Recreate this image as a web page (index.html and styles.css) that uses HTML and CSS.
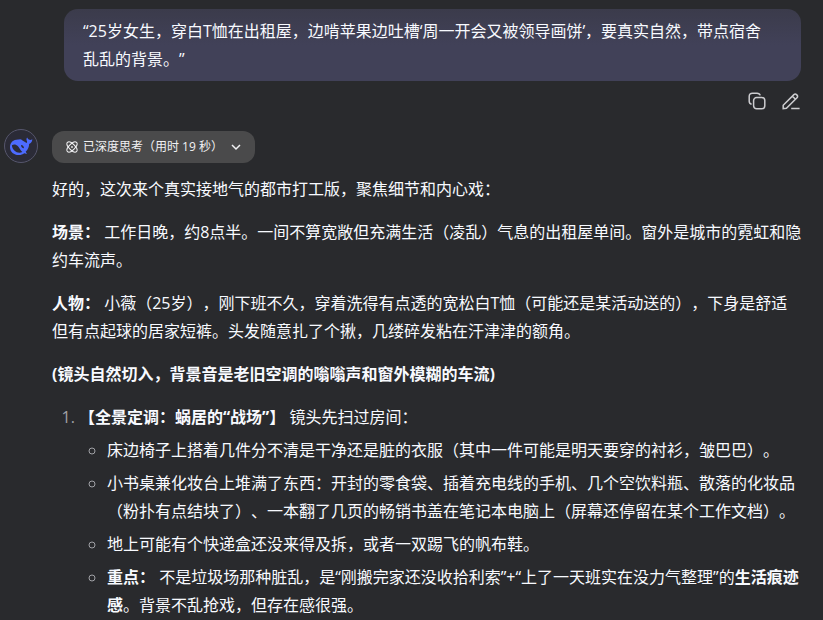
FILE: index.html
```html
<!DOCTYPE html>
<html lang="zh-CN">
<head>
    <meta charset="UTF-8">
    <meta name="viewport" content="width=device-width, initial-scale=1.0">
    <title>对话</title>
    <link rel="stylesheet" href="styles.css">
</head>
<body>
    <main class="chat">
        <section class="question">
            <p class="bubble">“25岁女生，穿白T恤在出租屋，边啃苹果边吐槽‘周一开会又被领导画饼’，要真实自然，带点宿舍乱乱的背景。”</p>
            <div class="actions">
                <button type="button" class="icon-button" aria-label="复制">
                    <svg viewBox="0 0 18 18" width="18" height="18">
                        <rect x="5.6" y="5.6" width="11.2" height="11.2" rx="3"/>
                        <path d="M3.6 12.2C2 11.8 1.2 10.8 1.2 9.2V4.4C1.2 2.4 2.4 1.2 4.4 1.2H9C10.8 1.2 11.8 2 12.2 3.4"/>
                    </svg>
                </button>
                <button type="button" class="icon-button" aria-label="编辑">
                    <svg viewBox="0 0 18 18" width="18" height="18">
                        <path d="M1.2 16.6V13.3L11.9 2.6C12.7 1.8 13.7 1.8 14.5 2.6L15 3.1C15.8 3.900 15.8 4.9 15 5.7L4.4 16.2ZM10.4 4.2L13.5 7.2M9.2 16.6H17.6"/>
                    </svg>
                </button>
            </div>
        </section>

        <section class="reply">
            <div class="avatar">
                <svg viewBox="0 0 24 24" width="24" height="24">
                    <path d="M23.3 5.3C22.1 6.1 21.2 6 20.2 5.8C19.4 5.5 18.7 4.7 18.1 3.6C17.3 4.6 17.3 6.1 18 7.3C18.3 8 18.1 8.6 17.6 9.1L13.5 6.4C12.3 5.3 11 5.1 10.3 5.5C4.7 5 1 8.3 1 12.9C1 17.9 4.900 21 9.7 21C12.1 21 13.9 20.3 15.2 19.2L18 20L16.7 17.7C19 15.5 20.2 12.7 20.1 10C22 9.5 23.2 7.8 23.3 5.3ZM13.4 18C10.500 19.600 7.600 18.600 5.600 16.800C3.900 15.200 3 13.300 2.900 11.300C4.600 9.900 7.100 10.300 9 12.200C10.700 14 11.400 16.200 13.400 18ZM15 14.200C13.2 13.9 11.900 12.500 12.100 10.900C13.700 10.800 15 12.200 15 14.200Z"/>
                </svg>
            </div>
            <div class="message">
                <button type="button" class="thinking">
                    <svg class="atom" viewBox="0 0 12 12" width="12" height="12">
                        <ellipse cx="6" cy="6" rx="6.4" ry="2.9" transform="rotate(45 6 6)"/>
                        <ellipse cx="6" cy="6" rx="6.4" ry="2.9" transform="rotate(-45 6 6)"/>
                        <circle cx="6" cy="6" r=".6"/>
                    </svg>
                    <span>已深度思考（用时 19 秒）</span>
                    <svg class="chevron" viewBox="0 0 10 10" width="10" height="10">
                        <path d="M1 3L5 7L9 3"/>
                    </svg>
                </button>

                <p>好的，这次来个真实接地气的都市打工版，聚焦细节和内心戏：</p>
                <p><strong>场景：</strong> 工作日晚，约8点半。一间不算宽敞但充满生活（凌乱）气息的出租屋单间。窗外是城市的霓虹和隐约车流声。</p>
                <p><strong>人物：</strong> 小薇（25岁），刚下班不久，穿着洗得有点透的宽松白T恤（可能还是某活动送的），下身是舒适但有点起球的居家短裤。头发随意扎了个揪，几缕碎发粘在汗津津的额角。</p>
                <p><strong>(镜头自然切入，背景音是老旧空调的嗡嗡声和窗外模糊的车流)</strong></p>
                <ol>
                    <li><strong>【全景定调：蜗居的“战场”】</strong> 镜头先扫过房间：
                        <ul>
                            <li>床边椅子上搭着几件分不清是干净还是脏的衣服（其中一件可能是明天要穿的衬衫，皱巴巴）。</li>
                            <li>小书桌兼化妆台上堆满了东西：开封的零食袋、插着充电线的手机、几个空饮料瓶、散落的化妆品（粉扑有点结块了）、一本翻了几页的畅销书盖在笔记本电脑上（屏幕还停留在某个工作文档）。</li>
                            <li>地上可能有个快递盒还没来得及拆，或者一双踢飞的帆布鞋。</li>
                            <li><strong>重点：</strong> 不是垃圾场那种脏乱，是“刚搬完家还没收拾利索”+“上了一天班实在没力气整理”的<strong>生活痕迹感</strong>。背景不乱抢戏，但存在感很强。</li>
                        </ul>
                    </li>
                </ol>
            </div>
        </section>
    </main>
</body>
</html>
```

FILE: styles.css
```css
* {
    box-sizing: border-box;
}
body {
    margin: 0;
    background: #292a2d;
    color: #f8faff;
    font-family: "Open Sans", "Noto Sans CJK SC", sans-serif;
    font-size: 16px;
    line-height: 28px;
    text-spacing-trim: space-all;
}
p, ol, ul {
    margin: 0;
    padding: 0;
}
button {
    border: none;
    padding: 0;
    background: none;
    font: inherit;
    cursor: pointer;
}
svg {
    fill: none;
    stroke: currentColor;
    flex: none;
}
.chat {
    padding: 9px 21px 0 4px;
}
.question {
    margin: 0 1px 0 60px;
}
.bubble {
    padding: 8px 28px 8px 19px;
    border-radius: 14px;
    background: linear-gradient(#3b3b4b, #414158 50%);
}
.actions {
    display: flex;
    justify-content: flex-end;
    gap: 16px;
    margin-top: 11px;
    padding-right: 1px;
}
.icon-button {
    display: flex;
    color: #cdcdd0;
}
.icon-button svg {
    stroke-width: 1.5;
}
.reply {
    display: flex;
    align-items: flex-start;
    gap: 14px;
    margin-top: 19px;
}
.avatar {
    display: flex;
    align-items: center;
    justify-content: center;
    flex: none;
    width: 34px;
    height: 34px;
    border: 1px solid #56566c;
    border-radius: 50%;
    background: #2b2b37;
}
.avatar svg {
    fill: #4d6bfe;
    stroke: none;
}
.message {
    flex: 1;
    min-width: 0;
    padding-top: 2px;
}
.message > p, .message > ol {
    margin-top: 15px;
}
.message > .thinking + p {
    margin-top: 12px;
}
.thinking {
    display: flex;
    align-items: center;
    height: 32px;
    padding: 0 14px;
    border-radius: 12px;
    background: #4a4a4b;
    color: #f1f1f3;
    font-size: 12px;
}
.thinking span {
    margin: 0 8px 0 5px;
}
.chevron {
    stroke-width: 1.5;
}
ol {
    padding-left: 27px;
}
ul {
    padding-left: 28px;
    list-style: circle;
}
li li {
    margin-top: 5px;
}
li::marker {
    color: #a0a1a6;
}
```
